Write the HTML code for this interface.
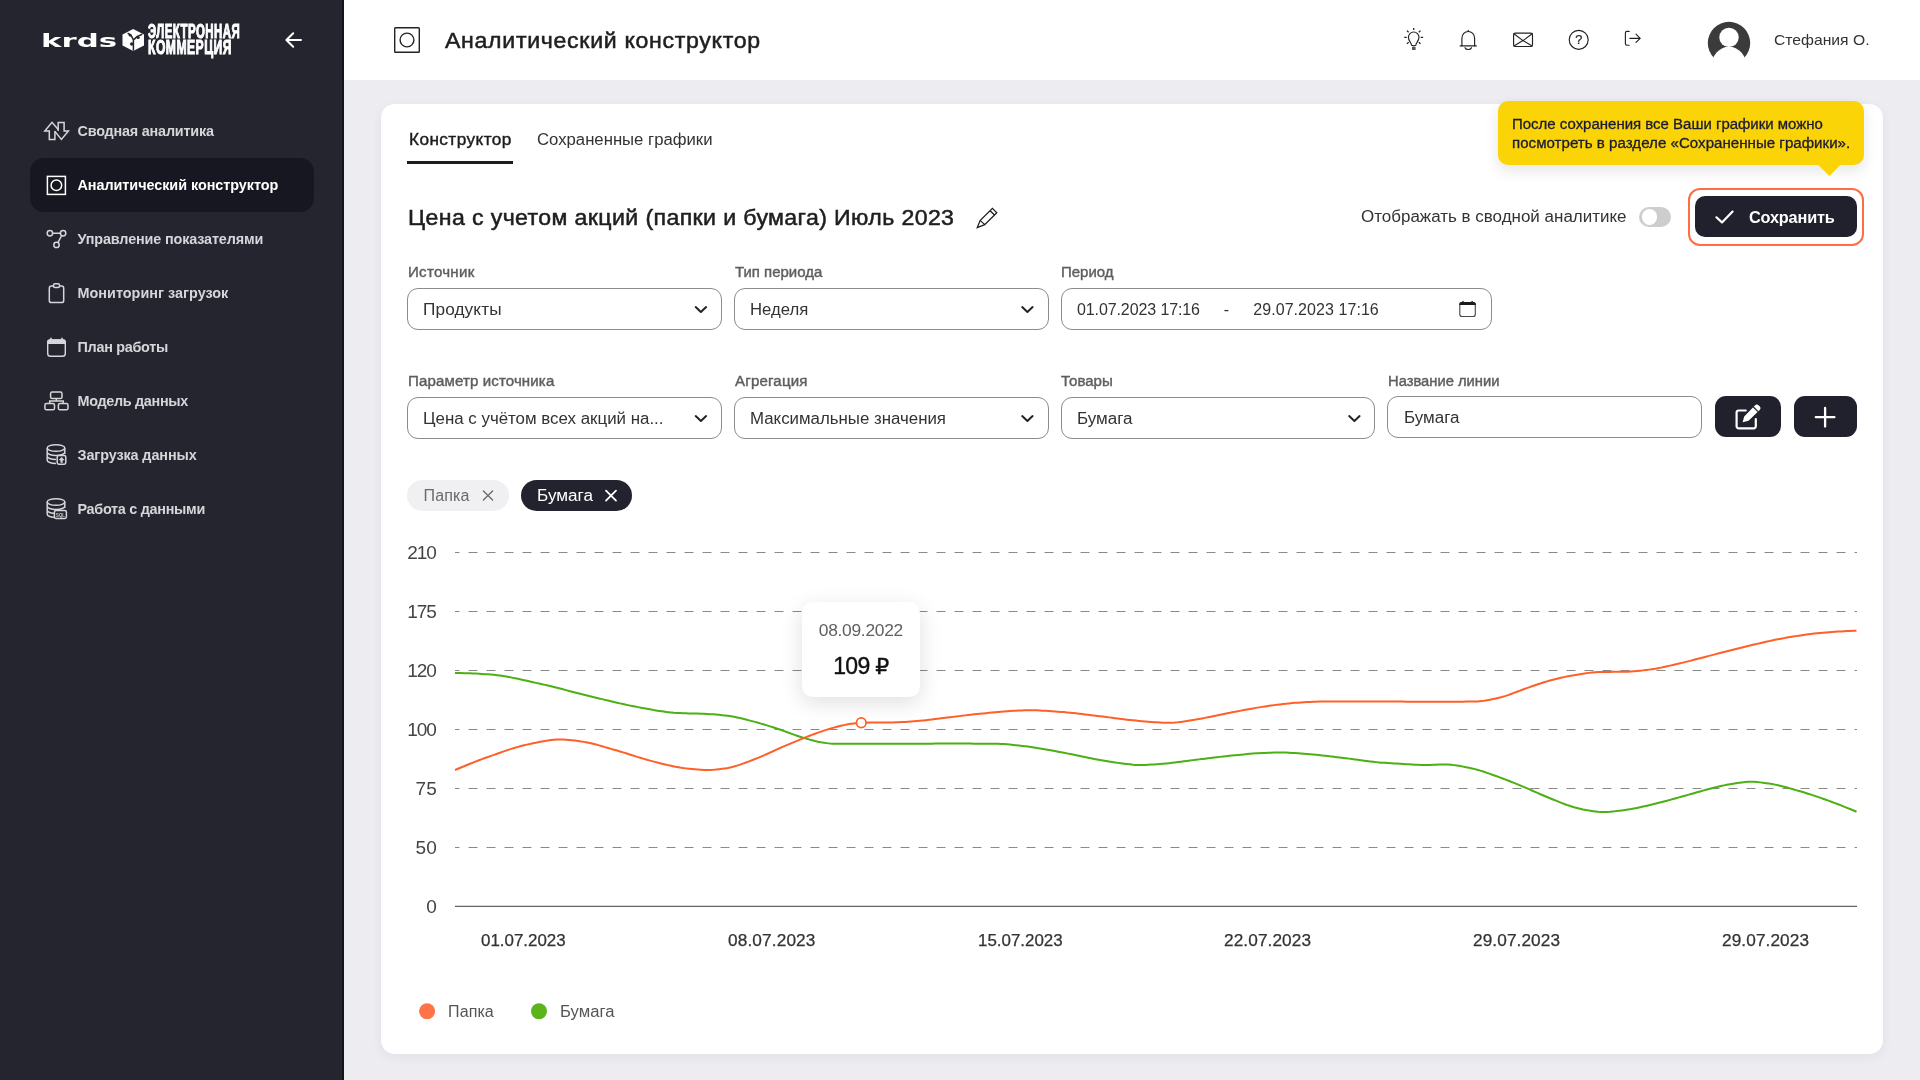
<!DOCTYPE html>
<html lang="ru">
<head>
<meta charset="utf-8">
<title>Аналитический конструктор</title>
<style>
html,body{margin:0;padding:0}
body{width:1920px;height:1080px;position:relative;overflow:hidden;background:#edecf1;font-family:"Liberation Sans",sans-serif;}
.t{position:absolute;white-space:nowrap;line-height:1;}
.a{position:absolute;box-sizing:border-box}
.sel{position:absolute;box-sizing:border-box;border:1px solid #8c8c8c;border-radius:11px;background:#fff;height:42px}
.btn{position:absolute;background:#20212c;border-radius:11px}
svg{position:absolute;left:0;top:0;overflow:visible}
svg text{font-family:"Liberation Sans",sans-serif}
</style>
</head>
<body>
<!-- sidebar -->
<div class="a" style="left:0;top:0;width:344px;height:1080px;background:#24252f"></div>
<div class="a" style="left:341.8px;top:0;width:2.2px;height:1080px;background:#14141f"></div>
<div class="a" style="left:30px;top:158px;width:284px;height:54px;border-radius:14px;background:#171721"></div>
<!-- header -->
<div class="a" style="left:344px;top:0;width:1576px;height:80px;background:#fff"></div>
<!-- card -->
<div class="a" style="left:381px;top:104px;width:1502px;height:949.6px;border-radius:14px;background:#fff;box-shadow:0 3px 12px rgba(40,40,70,.055)"></div>
<!-- tab underline -->
<div class="a" style="left:407px;top:161px;width:106px;height:3px;background:#1c1c1c"></div>
<!-- toggle -->
<div class="a" style="left:1639.1px;top:206.6px;width:31.7px;height:20.6px;border-radius:10.3px;background:#cdcdcd"></div>
<div class="a" style="left:1641.8px;top:209.4px;width:15.2px;height:15.2px;border-radius:7.6px;background:#fff"></div>
<!-- save -->
<div class="a" style="left:1687.9px;top:187.8px;width:176.1px;height:57.8px;border-radius:12px;border:2px solid #ff6d45"></div>
<div class="btn" style="left:1695px;top:196px;width:162px;height:41.4px;border-radius:10px"></div>
<!-- selects -->
<div class="sel" style="left:407px;top:288px;width:315px"></div>
<div class="sel" style="left:734px;top:288px;width:314.5px"></div>
<div class="sel" style="left:1060.5px;top:288px;width:431px"></div>
<div class="sel" style="left:407px;top:397px;width:315px"></div>
<div class="sel" style="left:734px;top:397px;width:314.5px"></div>
<div class="sel" style="left:1060.5px;top:397px;width:314.5px"></div>
<div class="sel" style="left:1387px;top:396px;width:315px"></div>
<div class="btn" style="left:1714.9px;top:396.2px;width:65.7px;height:41.3px"></div>
<div class="btn" style="left:1794px;top:396.2px;width:62.5px;height:41.3px"></div>
<!-- chips -->
<div class="a" style="left:407px;top:480px;width:102px;height:31px;border-radius:15.5px;background:#f0f0f3"></div>
<div class="a" style="left:521.2px;top:480px;width:110.6px;height:31px;border-radius:15.5px;background:#22232e"></div>
<svg width="1920" height="1080" viewBox="0 0 1920 1080">
<line x1="455" y1="552.5" x2="1857" y2="552.5" stroke="#8a8a8a" stroke-width="1.1" stroke-dasharray="9 9" stroke-dashoffset="4.5"/>
<line x1="455" y1="611.5" x2="1857" y2="611.5" stroke="#8a8a8a" stroke-width="1.1" stroke-dasharray="9 9" stroke-dashoffset="4.5"/>
<line x1="455" y1="670.5" x2="1857" y2="670.5" stroke="#8a8a8a" stroke-width="1.1" stroke-dasharray="9 9" stroke-dashoffset="4.5"/>
<line x1="455" y1="729.5" x2="1857" y2="729.5" stroke="#8a8a8a" stroke-width="1.1" stroke-dasharray="9 9" stroke-dashoffset="4.5"/>
<line x1="455" y1="788.5" x2="1857" y2="788.5" stroke="#8a8a8a" stroke-width="1.1" stroke-dasharray="9 9" stroke-dashoffset="4.5"/>
<line x1="455" y1="847.5" x2="1857" y2="847.5" stroke="#8a8a8a" stroke-width="1.1" stroke-dasharray="9 9" stroke-dashoffset="4.5"/>
<line x1="455" y1="906.4" x2="1857" y2="906.4" stroke="#666" stroke-width="1.2"/>
<path d="M455.0,673.00L458.0,673.02L461.0,673.07L464.0,673.13L467.0,673.23L470.0,673.34L473.0,673.47L476.0,673.62L479.0,673.78L482.0,673.96L485.0,674.15L488.0,674.36L491.0,674.58L494.0,674.85L497.0,675.18L500.0,675.57L503.0,676.02L506.0,676.51L509.0,677.05L512.0,677.62L515.0,678.22L518.0,678.85L521.0,679.50L524.0,680.16L527.0,680.84L530.0,681.52L533.0,682.20L536.0,682.87L539.0,683.53L542.0,684.19L545.0,684.87L548.0,685.57L551.0,686.30L554.0,687.04L557.0,687.80L560.0,688.57L563.0,689.34L566.0,690.13L569.0,690.91L572.0,691.70L575.0,692.48L578.0,693.26L581.0,694.03L584.0,694.78L587.0,695.53L590.0,696.25L593.0,696.97L596.0,697.69L599.0,698.42L602.0,699.14L605.0,699.87L608.0,700.59L611.0,701.30L614.0,702.01L617.0,702.71L620.0,703.39L623.0,704.06L626.0,704.72L629.0,705.36L632.0,705.97L635.0,706.57L638.0,707.14L641.0,707.68L644.0,708.23L647.0,708.78L650.0,709.33L653.0,709.87L656.0,710.39L659.0,710.89L662.0,711.36L665.0,711.79L668.0,712.17L671.0,712.50L674.0,712.77L677.0,712.97L680.0,713.11L683.0,713.22L686.0,713.31L689.0,713.38L692.0,713.45L695.0,713.52L698.0,713.59L701.0,713.69L704.0,713.82L707.0,713.96L710.0,714.14L713.0,714.34L716.0,714.58L719.0,714.84L722.0,715.13L725.0,715.46L728.0,715.81L731.0,716.25L734.0,716.79L737.0,717.40L740.0,718.08L743.0,718.81L746.0,719.57L749.0,720.35L752.0,721.12L755.0,721.90L758.0,722.73L761.0,723.59L764.0,724.48L767.0,725.40L770.0,726.34L773.0,727.29L776.0,728.26L779.0,729.25L782.0,730.29L785.0,731.37L788.0,732.48L791.0,733.59L794.0,734.68L797.0,735.74L800.0,736.73L803.0,737.65L806.0,738.54L809.0,739.41L812.0,740.25L815.0,741.02L818.0,741.71L821.0,742.27L824.0,742.71L827.0,743.12L830.0,743.46L833.0,743.69L836.0,743.76L839.0,743.78L842.0,743.81L845.0,743.82L848.0,743.84L851.0,743.85L854.0,743.86L857.0,743.86L860.0,743.87L863.0,743.87L866.0,743.86L869.0,743.86L872.0,743.86L875.0,743.85L878.0,743.84L881.0,743.83L884.0,743.82L887.0,743.81L890.0,743.79L893.0,743.78L896.0,743.77L899.0,743.75L902.0,743.74L905.0,743.73L908.0,743.72L911.0,743.70L914.0,743.69L917.0,743.68L920.0,743.67L923.0,743.66L926.0,743.65L929.0,743.64L932.0,743.63L935.0,743.62L938.0,743.62L941.0,743.61L944.0,743.61L947.0,743.60L950.0,743.60L953.0,743.60L956.0,743.60L959.0,743.60L962.0,743.61L965.0,743.61L968.0,743.62L971.0,743.62L974.0,743.63L977.0,743.64L980.0,743.66L983.0,743.67L986.0,743.69L989.0,743.71L992.0,743.73L995.0,743.75L998.0,743.81L1001.0,743.93L1004.0,744.11L1007.0,744.34L1010.0,744.61L1013.0,744.91L1016.0,745.23L1019.0,745.57L1022.0,745.91L1025.0,746.25L1028.0,746.61L1031.0,747.00L1034.0,747.43L1037.0,747.90L1040.0,748.39L1043.0,748.90L1046.0,749.43L1049.0,749.98L1052.0,750.54L1055.0,751.10L1058.0,751.66L1061.0,752.22L1064.0,752.78L1067.0,753.36L1070.0,753.96L1073.0,754.58L1076.0,755.20L1079.0,755.84L1082.0,756.47L1085.0,757.10L1088.0,757.72L1091.0,758.33L1094.0,758.91L1097.0,759.47L1100.0,760.00L1103.0,760.51L1106.0,761.01L1109.0,761.50L1112.0,761.98L1115.0,762.43L1118.0,762.87L1121.0,763.27L1124.0,763.64L1127.0,763.98L1130.0,764.35L1133.0,764.67L1136.0,764.91L1139.0,765.00L1142.0,764.98L1145.0,764.90L1148.0,764.77L1151.0,764.59L1154.0,764.39L1157.0,764.17L1160.0,763.94L1163.0,763.71L1166.0,763.46L1169.0,763.16L1172.0,762.84L1175.0,762.49L1178.0,762.11L1181.0,761.73L1184.0,761.33L1187.0,760.93L1190.0,760.52L1193.0,760.13L1196.0,759.74L1199.0,759.37L1202.0,759.01L1205.0,758.66L1208.0,758.30L1211.0,757.93L1214.0,757.57L1217.0,757.22L1220.0,756.87L1223.0,756.52L1226.0,756.18L1229.0,755.86L1232.0,755.54L1235.0,755.24L1238.0,754.95L1241.0,754.67L1244.0,754.39L1247.0,754.11L1250.0,753.84L1253.0,753.60L1256.0,753.37L1259.0,753.18L1262.0,753.02L1265.0,752.89L1268.0,752.77L1271.0,752.66L1274.0,752.58L1277.0,752.52L1280.0,752.50L1283.0,752.53L1286.0,752.61L1289.0,752.73L1292.0,752.89L1295.0,753.08L1298.0,753.30L1301.0,753.54L1304.0,753.78L1307.0,754.04L1310.0,754.29L1313.0,754.54L1316.0,754.80L1319.0,755.09L1322.0,755.39L1325.0,755.72L1328.0,756.06L1331.0,756.41L1334.0,756.77L1337.0,757.14L1340.0,757.51L1343.0,757.89L1346.0,758.26L1349.0,758.63L1352.0,759.00L1355.0,759.39L1358.0,759.80L1361.0,760.22L1364.0,760.64L1367.0,761.04L1370.0,761.43L1373.0,761.80L1376.0,762.13L1379.0,762.41L1382.0,762.66L1385.0,762.87L1388.0,763.07L1391.0,763.25L1394.0,763.42L1397.0,763.58L1400.0,763.75L1403.0,763.93L1406.0,764.13L1409.0,764.33L1412.0,764.53L1415.0,764.70L1418.0,764.85L1421.0,764.95L1424.0,765.00L1427.0,764.98L1430.0,764.92L1433.0,764.81L1436.0,764.70L1439.0,764.60L1442.0,764.52L1445.0,764.50L1448.0,764.58L1451.0,764.80L1454.0,765.13L1457.0,765.56L1460.0,766.06L1463.0,766.61L1466.0,767.20L1469.0,767.80L1472.0,768.42L1475.0,769.15L1478.0,769.96L1481.0,770.86L1484.0,771.82L1487.0,772.84L1490.0,773.89L1493.0,774.97L1496.0,776.06L1499.0,777.14L1502.0,778.23L1505.0,779.35L1508.0,780.52L1511.0,781.71L1514.0,782.93L1517.0,784.17L1520.0,785.42L1523.0,786.67L1526.0,787.92L1529.0,789.20L1532.0,790.50L1535.0,791.82L1538.0,793.14L1541.0,794.46L1544.0,795.75L1547.0,797.02L1550.0,798.25L1553.0,799.47L1556.0,800.69L1559.0,801.90L1562.0,803.09L1565.0,804.24L1568.0,805.32L1571.0,806.32L1574.0,807.22L1577.0,808.03L1580.0,808.79L1583.0,809.48L1586.0,810.09L1589.0,810.60L1592.0,811.03L1595.0,811.43L1598.0,811.77L1601.0,811.97L1604.0,811.99L1607.0,811.90L1610.0,811.71L1613.0,811.45L1616.0,811.13L1619.0,810.77L1622.0,810.39L1625.0,810.00L1628.0,809.57L1631.0,809.08L1634.0,808.52L1637.0,807.91L1640.0,807.27L1643.0,806.60L1646.0,805.92L1649.0,805.23L1652.0,804.54L1655.0,803.82L1658.0,803.07L1661.0,802.29L1664.0,801.50L1667.0,800.68L1670.0,799.86L1673.0,799.03L1676.0,798.19L1679.0,797.35L1682.0,796.51L1685.0,795.68L1688.0,794.86L1691.0,794.04L1694.0,793.19L1697.0,792.33L1700.0,791.47L1703.0,790.62L1706.0,789.78L1709.0,788.96L1712.0,788.16L1715.0,787.41L1718.0,786.70L1721.0,786.03L1724.0,785.39L1727.0,784.78L1730.0,784.20L1733.0,783.67L1736.0,783.21L1739.0,782.80L1742.0,782.39L1745.0,782.04L1748.0,781.81L1751.0,781.75L1754.0,781.85L1757.0,782.07L1760.0,782.38L1763.0,782.75L1766.0,783.17L1769.0,783.60L1772.0,784.06L1775.0,784.61L1778.0,785.24L1781.0,785.95L1784.0,786.71L1787.0,787.51L1790.0,788.35L1793.0,789.22L1796.0,790.09L1799.0,790.96L1802.0,791.83L1805.0,792.74L1808.0,793.67L1811.0,794.64L1814.0,795.63L1817.0,796.64L1820.0,797.68L1823.0,798.73L1826.0,799.80L1829.0,800.89L1832.0,801.98L1835.0,803.10L1838.0,804.25L1841.0,805.42L1844.0,806.60L1847.0,807.81L1850.0,809.04L1853.0,810.28L1856.0,811.54L1856.5,811.75" fill="none" stroke="#4caf14" stroke-width="2" stroke-linejoin="round"/>
<path d="M455.0,770.00L458.0,768.72L461.0,767.46L464.0,766.22L467.0,764.99L470.0,763.79L473.0,762.60L476.0,761.42L479.0,760.28L482.0,759.15L485.0,758.04L488.0,756.96L491.0,755.90L494.0,754.84L497.0,753.77L500.0,752.71L503.0,751.67L506.0,750.64L509.0,749.64L512.0,748.67L515.0,747.75L518.0,746.87L521.0,746.05L524.0,745.29L527.0,744.61L530.0,743.96L533.0,743.31L536.0,742.67L539.0,742.05L542.0,741.46L545.0,740.93L548.0,740.46L551.0,740.06L554.0,739.76L557.0,739.57L560.0,739.50L563.0,739.55L566.0,739.71L569.0,739.95L572.0,740.25L575.0,740.61L578.0,740.99L581.0,741.39L584.0,741.87L587.0,742.44L590.0,743.09L593.0,743.81L596.0,744.58L599.0,745.40L602.0,746.25L605.0,747.12L608.0,748.00L611.0,748.87L614.0,749.72L617.0,750.56L620.0,751.44L623.0,752.35L626.0,753.28L629.0,754.23L632.0,755.18L635.0,756.13L638.0,757.08L641.0,758.00L644.0,758.90L647.0,759.77L650.0,760.60L653.0,761.38L656.0,762.14L659.0,762.91L662.0,763.67L665.0,764.41L668.0,765.13L671.0,765.81L674.0,766.45L677.0,767.03L680.0,767.55L683.0,768.00L686.0,768.37L689.0,768.71L692.0,769.04L695.0,769.34L698.0,769.60L701.0,769.80L704.0,769.94L707.0,770.00L710.0,769.96L713.0,769.80L716.0,769.55L719.0,769.22L722.0,768.83L725.0,768.39L728.0,767.92L731.0,767.32L734.0,766.56L737.0,765.66L740.0,764.66L743.0,763.58L746.0,762.46L749.0,761.32L752.0,760.19L755.0,759.05L758.0,757.85L761.0,756.60L764.0,755.31L767.0,753.98L770.0,752.63L773.0,751.26L776.0,749.89L779.0,748.53L782.0,747.18L785.0,745.86L788.0,744.58L791.0,743.34L794.0,742.11L797.0,740.87L800.0,739.63L803.0,738.40L806.0,737.19L809.0,735.99L812.0,734.83L815.0,733.70L818.0,732.61L821.0,731.57L824.0,730.58L827.0,729.65L830.0,728.76L833.0,727.90L836.0,727.06L839.0,726.27L842.0,725.54L845.0,724.89L848.0,724.32L851.0,723.85L854.0,723.41L857.0,723.04L860.0,722.80L863.0,722.71L866.0,722.66L869.0,722.62L872.0,722.60L875.0,722.59L878.0,722.58L881.0,722.57L884.0,722.56L887.0,722.53L890.0,722.50L893.0,722.44L896.0,722.34L899.0,722.22L902.0,722.06L905.0,721.88L908.0,721.68L911.0,721.47L914.0,721.24L917.0,721.00L920.0,720.75L923.0,720.47L926.0,720.15L929.0,719.79L932.0,719.42L935.0,719.05L938.0,718.69L941.0,718.34L944.0,717.98L947.0,717.61L950.0,717.24L953.0,716.87L956.0,716.49L959.0,716.12L962.0,715.75L965.0,715.38L968.0,715.03L971.0,714.68L974.0,714.34L977.0,714.01L980.0,713.70L983.0,713.41L986.0,713.13L989.0,712.87L992.0,712.61L995.0,712.34L998.0,712.07L1001.0,711.81L1004.0,711.55L1007.0,711.31L1010.0,711.08L1013.0,710.87L1016.0,710.68L1019.0,710.53L1022.0,710.40L1025.0,710.31L1028.0,710.26L1031.0,710.25L1034.0,710.29L1037.0,710.37L1040.0,710.48L1043.0,710.63L1046.0,710.80L1049.0,711.00L1052.0,711.21L1055.0,711.43L1058.0,711.66L1061.0,711.89L1064.0,712.12L1067.0,712.38L1070.0,712.66L1073.0,712.98L1076.0,713.31L1079.0,713.66L1082.0,714.02L1085.0,714.39L1088.0,714.77L1091.0,715.15L1094.0,715.52L1097.0,715.89L1100.0,716.25L1103.0,716.61L1106.0,716.99L1109.0,717.37L1112.0,717.77L1115.0,718.16L1118.0,718.55L1121.0,718.94L1124.0,719.31L1127.0,719.67L1130.0,720.01L1133.0,720.33L1136.0,720.62L1139.0,720.88L1142.0,721.14L1145.0,721.41L1148.0,721.67L1151.0,721.91L1154.0,722.14L1157.0,722.34L1160.0,722.51L1163.0,722.64L1166.0,722.72L1169.0,722.75L1172.0,722.71L1175.0,722.55L1178.0,722.28L1181.0,721.92L1184.0,721.50L1187.0,721.02L1190.0,720.50L1193.0,719.97L1196.0,719.43L1199.0,718.92L1202.0,718.41L1205.0,717.88L1208.0,717.31L1211.0,716.71L1214.0,716.10L1217.0,715.47L1220.0,714.83L1223.0,714.19L1226.0,713.55L1229.0,712.92L1232.0,712.31L1235.0,711.72L1238.0,711.16L1241.0,710.61L1244.0,710.05L1247.0,709.50L1250.0,708.95L1253.0,708.42L1256.0,707.89L1259.0,707.38L1262.0,706.88L1265.0,706.40L1268.0,705.95L1271.0,705.52L1274.0,705.13L1277.0,704.75L1280.0,704.39L1283.0,704.04L1286.0,703.70L1289.0,703.39L1292.0,703.10L1295.0,702.85L1298.0,702.63L1301.0,702.44L1304.0,702.27L1307.0,702.10L1310.0,701.95L1313.0,701.81L1316.0,701.69L1319.0,701.59L1322.0,701.53L1325.0,701.50L1328.0,701.49L1331.0,701.48L1334.0,701.48L1337.0,701.47L1340.0,701.47L1343.0,701.47L1346.0,701.46L1349.0,701.47L1352.0,701.47L1355.0,701.47L1358.0,701.47L1361.0,701.48L1364.0,701.48L1367.0,701.49L1370.0,701.50L1373.0,701.51L1376.0,701.51L1379.0,701.52L1382.0,701.53L1385.0,701.54L1388.0,701.55L1391.0,701.57L1394.0,701.58L1397.0,701.59L1400.0,701.60L1403.0,701.61L1406.0,701.63L1409.0,701.64L1412.0,701.65L1415.0,701.66L1418.0,701.68L1421.0,701.69L1424.0,701.70L1427.0,701.71L1430.0,701.72L1433.0,701.72L1436.0,701.73L1439.0,701.73L1442.0,701.73L1445.0,701.73L1448.0,701.72L1451.0,701.71L1454.0,701.70L1457.0,701.69L1460.0,701.67L1463.0,701.64L1466.0,701.61L1469.0,701.58L1472.0,701.54L1475.0,701.50L1478.0,701.38L1481.0,701.12L1484.0,700.73L1487.0,700.25L1490.0,699.69L1493.0,699.07L1496.0,698.41L1499.0,697.73L1502.0,697.01L1505.0,696.14L1508.0,695.15L1511.0,694.06L1514.0,692.92L1517.0,691.75L1520.0,690.58L1523.0,689.46L1526.0,688.40L1529.0,687.35L1532.0,686.30L1535.0,685.24L1538.0,684.21L1541.0,683.20L1544.0,682.24L1547.0,681.34L1550.0,680.50L1553.0,679.71L1556.0,678.95L1559.0,678.22L1562.0,677.53L1565.0,676.87L1568.0,676.25L1571.0,675.68L1574.0,675.16L1577.0,674.68L1580.0,674.20L1583.0,673.73L1586.0,673.29L1589.0,672.88L1592.0,672.53L1595.0,672.26L1598.0,672.07L1601.0,671.98L1604.0,671.93L1607.0,671.90L1610.0,671.88L1613.0,671.86L1616.0,671.85L1619.0,671.83L1622.0,671.80L1625.0,671.75L1628.0,671.66L1631.0,671.50L1634.0,671.28L1637.0,671.02L1640.0,670.71L1643.0,670.37L1646.0,670.01L1649.0,669.63L1652.0,669.22L1655.0,668.75L1658.0,668.21L1661.0,667.61L1664.0,666.98L1667.0,666.31L1670.0,665.63L1673.0,664.95L1676.0,664.27L1679.0,663.58L1682.0,662.87L1685.0,662.13L1688.0,661.38L1691.0,660.61L1694.0,659.83L1697.0,659.05L1700.0,658.26L1703.0,657.47L1706.0,656.68L1709.0,655.90L1712.0,655.13L1715.0,654.36L1718.0,653.59L1721.0,652.81L1724.0,652.03L1727.0,651.25L1730.0,650.47L1733.0,649.70L1736.0,648.93L1739.0,648.17L1742.0,647.42L1745.0,646.69L1748.0,645.97L1751.0,645.27L1754.0,644.57L1757.0,643.87L1760.0,643.17L1763.0,642.48L1766.0,641.80L1769.0,641.13L1772.0,640.48L1775.0,639.85L1778.0,639.24L1781.0,638.66L1784.0,638.11L1787.0,637.58L1790.0,637.09L1793.0,636.60L1796.0,636.12L1799.0,635.65L1802.0,635.20L1805.0,634.76L1808.0,634.35L1811.0,633.96L1814.0,633.59L1817.0,633.25L1820.0,632.94L1823.0,632.67L1826.0,632.42L1829.0,632.19L1832.0,631.97L1835.0,631.77L1838.0,631.57L1841.0,631.39L1844.0,631.23L1847.0,631.08L1850.0,630.95L1853.0,630.85L1856.0,630.76L1856.5,630.75" fill="none" stroke="#ff6028" stroke-width="2" stroke-linejoin="round"/>
<circle cx="861.25" cy="722.75" r="4.8" fill="#fff" stroke="#ff6028" stroke-width="1.7"/>
<circle cx="427.1" cy="1011.25" r="8" fill="#ff7446"/>
<circle cx="539" cy="1011.25" r="8" fill="#5bb41c"/>
</svg>
<!-- chart tooltip -->
<div class="a" style="left:802px;top:602.4px;width:118px;height:94.2px;border-radius:10.5px;background:#fff;box-shadow:0 6px 22px rgba(0,0,0,.13)"></div>
<!-- yellow hint -->
<div class="a" style="left:1498px;top:101px;width:366px;height:64px;border-radius:10px;background:#fbd408;box-shadow:0 6px 14px rgba(30,30,50,.11)"></div>
<svg width="1920" height="1080" viewBox="0 0 1920 1080" fill="none" style="will-change:transform">
<!-- yellow hint arrow -->
<path d="M1817.8,164.5H1840.8L1829.9,175.6Q1829.4,176.1 1828.9,175.6Z" fill="#fbd408"/>
<!-- back arrow -->
<path d="M301,40H286.6M293.2,33.2L286.4,40L293.2,46.8" stroke="#fff" stroke-width="2" stroke-linecap="round" stroke-linejoin="round"/>
<!-- nav icons -->
<g stroke="#d6d6da" stroke-width="1.5" stroke-linejoin="miter">
 <!-- 1 arrows -->
 <path d="M58.2,129.6L52,122.3L44.8,131H49.3V139.4H54.9V131"/>
 <path d="M54.9,131.4L61.4,139.4L68.4,131H64.1V122.5H58.2V131"/>
 <!-- 3 nodes -->
 <circle cx="49.9" cy="233.2" r="2.7"/><circle cx="63.1" cy="233.2" r="2.7"/><circle cx="56.5" cy="244.9" r="2.7"/>
 <path d="M52.6,233.2H60.4M61.7,235.5L57.9,242.6"/>
 <!-- 4 clipboard -->
 <rect x="49.3" y="286" width="14.4" height="16.6" rx="2.2"/>
 <rect x="53.5" y="283.8" width="6" height="3.6" rx="1.5" fill="#24252f"/>
 <!-- 5 calendar -->
 <rect x="47.7" y="339.9" width="17.6" height="16.4" rx="2.8" stroke-width="1.4"/>
 <path d="M47,344.1V342.2A3,3 0 0 1 50,339.2H63A3,3 0 0 1 66,342.2V344.1Z" fill="#d6d6da" stroke="none"/>
 <path d="M51,338.4V340M62,338.4V340" stroke-width="1.6" stroke-linecap="round"/>
 <!-- 6 model -->
 <rect x="50.6" y="392.1" width="11.4" height="6.4" rx="1.6"/>
 <rect x="44.9" y="403.6" width="9.6" height="6.2" rx="1.6"/>
 <rect x="58.4" y="403.6" width="9.6" height="6.2" rx="1.6"/>
 <path d="M56.3,398.5V401M49.7,403.6V401H63.2V403.6"/>
 <!-- 7 db upload -->
 <ellipse cx="56" cy="448" rx="8.8" ry="3.3"/>
 <path d="M47.2,448V460.2C47.2,462 51,463.5 56,463.5M64.8,448V454M47.2,452.2C47.2,454 51,455.5 56,455.5 61,455.5 64.8,454 64.8,452.2M47.2,456.2C47.2,458 51,459.5 56,459.5"/>
 <rect x="57.2" y="455.6" width="8.6" height="8.6" rx="1.6" fill="#24252f"/>
 <path d="M61.6,457L64.6,460.3H62.7V462.8H60.5V460.3H58.6Z" fill="#d6d6da" stroke="none"/>
 <!-- 8 db sql -->
 <ellipse cx="56" cy="502" rx="8.8" ry="3.3"/>
 <path d="M47.2,502V514.2C47.2,516 51,517.5 56,517.5M64.8,502V508M47.2,506.2C47.2,508 51,509.5 56,509.5 61,509.5 64.8,508 64.8,506.2M47.2,510.2C47.2,512 51,513.5 56,513.5"/>
 <rect x="54.4" y="510.6" width="12" height="7.8" rx="1.6" fill="#24252f"/>
</g>
<text x="60.4" y="516.6" font-size="5.4" font-weight="700" fill="#d6d6da" text-anchor="middle" textLength="8.6" lengthAdjust="spacingAndGlyphs">SQL</text>
<!-- 2 active -->
<rect x="47.4" y="176.4" width="18" height="18" stroke="#fff" stroke-width="1.5"/>
<circle cx="56.4" cy="185.3" r="5.3" stroke="#fff" stroke-width="1.5"/>
<!-- header page icon -->
<rect x="394.7" y="27.7" width="24.6" height="24.6" rx="0.8" stroke="#222" stroke-width="1.4"/>
<circle cx="407" cy="40" r="6.9" stroke="#222" stroke-width="1.4"/>
<!-- header icons -->
<g stroke="#222" stroke-width="1.15" stroke-linecap="round" stroke-linejoin="round">
 <!-- bulb -->
 <path d="M1411.6,45.3C1411.4,42.6 1408.4,41.2 1408.4,37.3A5.3,5.3 0 0 1 1419,37.3C1419,41.2 1416,42.6 1415.8,45.3Q1413.7,46.3 1411.6,45.3Z"/>
 <path d="M1412,47.7H1415.6M1412,49.1H1415.6" stroke-width="1.1" stroke-linecap="butt"/>
 <path d="M1413.7,28.1V30.1M1406.9,30.6L1408.6,32.2M1420.5,30.6L1418.8,32.2M1404.3,37.4H1406.7M1420.7,37.4H1423.1M1406.9,43.9L1408.6,42.3M1420.5,43.9L1418.8,42.3" stroke-width="1.3" stroke-linecap="butt"/>
 <!-- bell -->
 <path d="M1461.9,45.8V38.2A6.35,6.7 0 0 1 1474.6,38.2V45.8"/>
 <path d="M1460.2,45.9H1476.3" stroke-width="1.25"/>
 <path d="M1465,47.7A3.4,2.6 0 0 0 1471.5,47.7M1468.25,30.3V31.4"/>
 <!-- mail -->
 <rect x="1513.6" y="33.1" width="18.9" height="13.4" rx="1.8"/>
 <path d="M1513.9,33.7L1523,40.6L1532.2,33.7M1513.9,46L1523,40.6L1532.2,46"/>
 <!-- help -->
 <circle cx="1578.7" cy="39.8" r="9.5"/>
 <!-- logout -->
 <path d="M1629.2,31.4H1627A1.6,1.6 0 0 0 1625.4,33V43.6A1.6,1.6 0 0 0 1627,45.2H1629.2"/>
 <path d="M1629.8,38.3H1640M1636,34.2L1640.2,38.3L1636,42.4"/>
</g>
<text x="1578.7" y="44.3" font-size="12.8" font-weight="400" fill="#222" stroke="#222" stroke-width=".2" text-anchor="middle">?</text>
<!-- avatar -->
<clipPath id="av"><circle cx="1729" cy="43" r="22"/></clipPath>
<circle cx="1729" cy="43" r="21.2" fill="#3b3b3b"/>
<circle cx="1729" cy="37.4" r="9.7" fill="#fff"/>
<ellipse cx="1729" cy="67" rx="17.6" ry="20.4" fill="#fff" clip-path="url(#av)"/>
<!-- pencil near title -->
<g stroke="#1c1c1c" stroke-width="1.25" stroke-linejoin="miter">
 <path d="M977.3,227.6L980.1,220.5L992.4,208.3L996.8,212.7L984.7,224.6Z"/>
 <path d="M990.1,210.7L994.5,215M980.3,220.6L984.6,224.4"/>
</g>
<!-- chevrons -->
<g stroke="#222" stroke-width="2" stroke-linecap="round" stroke-linejoin="round">
 <path d="M695.7,307.1L700.9,311.9L706.1,307.1"/>
 <path d="M1022.2,307.1L1027.4,311.9L1032.6,307.1"/>
 <path d="M695.7,416.1L700.9,420.9L706.1,416.1"/>
 <path d="M1022.2,416.1L1027.4,420.9L1032.6,416.1"/>
 <path d="M1349.2,416.1L1354.4,420.9L1359.6,416.1"/>
</g>
<!-- calendar in period -->
<rect x="1459.8" y="302.7" width="15.5" height="13.8" rx="2.3" stroke="#4a4a4a" stroke-width="1.15"/>
<path d="M1459.2,305V304.3A2.4,2.4 0 0 1 1461.6,301.9H1473.5A2.4,2.4 0 0 1 1475.9,304.3V305Z" fill="#1c1c1c"/>
<path d="M1463,301.4V302.4M1472.1,301.4V302.4" stroke="#1c1c1c" stroke-width="1.4" stroke-linecap="round"/>
<!-- check -->
<path d="M1716.4,217.3L1722,222.4L1732.6,211.6" stroke="#fff" stroke-width="2.2" stroke-linecap="round" stroke-linejoin="round"/>
<!-- edit icon -->
<path d="M1745.8,410.5H1738.7A2.1,2.1 0 0 0 1736.6,412.6V426.2A2.1,2.1 0 0 0 1738.7,428.3H1753.7A2.1,2.1 0 0 0 1755.8,426.2V419.2" stroke="#fff" stroke-width="2.2" stroke-linecap="round"/>
<path d="M1742.6,422.2L1744.2,416.6L1754.9,405.4A2.7,2.7 0 0 1 1758.8,405.4L1759.6,406.2A2.7,2.7 0 0 1 1759.6,410L1748.6,420.8Z" fill="#fff" stroke="#20212c" stroke-width="1.5" paint-order="stroke"/>
<path d="M1753.4,407L1758,411.6" stroke="#20212c" stroke-width="1.3"/>
<!-- plus -->
<path d="M1815.8,417.2H1834.4M1825.1,407.9V426.5" stroke="#fff" stroke-width="2.3" stroke-linecap="round"/>
<!-- chip x -->
<path d="M483.4,490.9L492.6,500M492.6,490.9L483.4,500" stroke="#6a6a6a" stroke-width="1.35" stroke-linecap="round"/>
<path d="M606,490.6L616,500.6M616,490.6L606,500.6" stroke="#fff" stroke-width="1.8" stroke-linecap="round"/>
</svg>

<div class="a" style="left:0;top:0;width:1920px;height:1080px;will-change:transform">
<svg width="344" height="80" viewBox="0 0 344 80">
<text x="41" y="47" font-size="17.8" font-weight="700" fill="#fff" textLength="76" lengthAdjust="spacingAndGlyphs" style="font-family:'DejaVu Sans',sans-serif">krds</text>
<path d="M133.2,29L144,34.5V45.5L133.2,51L122.5,45.5V34.5Z" fill="#fff"/>
<path d="M127.6,33.2Q131.5,34.6 133.4,40M142.3,34.3Q137.4,35.6 133.4,40V50.8" stroke="#24252f" stroke-width="1.5" fill="none"/>
<circle cx="130.2" cy="35.2" r="1.4" fill="#24252f"/><circle cx="138.2" cy="37.6" r="1.5" fill="#24252f"/><circle cx="131.7" cy="44" r="1.7" fill="#24252f"/>
</svg>
<span class="t" style="left:147.5px;top:21.6px;font-size:19.6px;font-weight:700;color:#fff;transform-origin:0 0;transform:scaleX(.585);-webkit-text-stroke:1.1px #fff;letter-spacing:.8px">ЭЛЕКТРОННАЯ</span>
<span class="t" style="left:147.5px;top:38.2px;font-size:19.4px;font-weight:700;color:#fff;transform-origin:0 0;transform:scaleX(.625);-webkit-text-stroke:1.1px #fff;letter-spacing:.8px">КОММЕРЦИЯ</span>

<span class="t" style="font-size:14.4px;font-weight:700;color:#d6d6da;top:124.00px;left:77.50px;letter-spacing:-0.198px;">Сводная аналитика</span>
<span class="t" style="font-size:14.4px;font-weight:700;color:#fff;top:178.00px;left:77.50px;letter-spacing:-0.043px;">Аналитический конструктор</span>
<span class="t" style="font-size:14.4px;font-weight:700;color:#d6d6da;top:232.00px;left:77.50px;letter-spacing:-0.144px;">Управление показателями</span>
<span class="t" style="font-size:14.4px;font-weight:700;color:#d6d6da;top:286.00px;left:77.50px;letter-spacing:0.019px;">Мониторинг загрузок</span>
<span class="t" style="font-size:14.4px;font-weight:700;color:#d6d6da;top:340.00px;left:77.50px;letter-spacing:-0.284px;">План работы</span>
<span class="t" style="font-size:14.4px;font-weight:700;color:#d6d6da;top:394.00px;left:77.50px;letter-spacing:-0.311px;">Модель данных</span>
<span class="t" style="font-size:14.4px;font-weight:700;color:#d6d6da;top:448.00px;left:77.50px;letter-spacing:-0.101px;">Загрузка данных</span>
<span class="t" style="font-size:14.4px;font-weight:700;color:#d6d6da;top:502.00px;left:77.50px;letter-spacing:-0.286px;">Работа с данными</span>
<span class="t" style="font-size:21.5px;font-weight:400;color:#1e1e1e;top:31.00px;left:444.90px;letter-spacing:0.646px;-webkit-text-stroke:0.5px #1e1e1e;transform-origin:0 0;transform:scaleX(1.0750);">Аналитический конструктор</span>
<span class="t" style="font-size:15px;font-weight:400;color:#333;top:32.00px;left:1773.50px;transform-origin:0 0;transform:scaleX(1.0453);">Стефания О.</span>
<span class="t" style="font-size:16px;font-weight:400;color:#1c1c1c;top:132.00px;left:409.20px;letter-spacing:0.393px;-webkit-text-stroke:0.4px #1c1c1c;transform-origin:0 0;transform:scaleX(1.0750);">Конструктор</span>
<span class="t" style="font-size:16px;font-weight:400;color:#333;top:132.00px;left:537.00px;transform-origin:0 0;transform:scaleX(1.0446);">Сохраненные графики</span>
<span class="t" style="font-size:21.5px;font-weight:400;color:#1e1e1e;top:208.00px;left:408.00px;letter-spacing:0.363px;-webkit-text-stroke:0.5px #1e1e1e;transform-origin:0 0;transform:scaleX(1.0750);">Цена с учетом акций (папки и бумага) Июль 2023</span>
<span class="t" style="font-size:16px;font-weight:400;color:#333;top:209.00px;left:1360.50px;transform-origin:0 0;transform:scaleX(1.0606);">Отображать в сводной аналитике</span>
<span class="t" style="font-size:16.3px;font-weight:700;color:#fff;top:209.00px;left:1749.00px;letter-spacing:-0.173px;">Сохранить</span>
<span class="t" style="font-size:14px;font-weight:400;color:#1b1b33;top:117.00px;left:1511.50px;-webkit-text-stroke:0.3px #1b1b33;transform-origin:0 0;transform:scaleX(1.0698);">После сохранения все Ваши графики можно</span>
<span class="t" style="font-size:14px;font-weight:400;color:#1b1b33;top:136.00px;left:1511.50px;letter-spacing:0.033px;-webkit-text-stroke:0.3px #1b1b33;transform-origin:0 0;transform:scaleX(1.0750);">посмотреть в разделе «Сохраненные графики».</span>
<span class="t" style="font-size:14px;font-weight:400;color:#5e5e5e;top:265.00px;left:407.50px;letter-spacing:0.264px;-webkit-text-stroke:0.4px #5e5e5e;transform-origin:0 0;transform:scaleX(1.0750);">Источник</span>
<span class="t" style="font-size:14px;font-weight:400;color:#5e5e5e;top:265.00px;left:734.50px;-webkit-text-stroke:0.4px #5e5e5e;transform-origin:0 0;transform:scaleX(1.0687);">Тип периода</span>
<span class="t" style="font-size:14px;font-weight:400;color:#5e5e5e;top:265.00px;left:1061.25px;-webkit-text-stroke:0.4px #5e5e5e;transform-origin:0 0;transform:scaleX(1.0690);">Период</span>
<span class="t" style="font-size:14px;font-weight:400;color:#5e5e5e;top:374.00px;left:407.50px;letter-spacing:0.116px;-webkit-text-stroke:0.4px #5e5e5e;transform-origin:0 0;transform:scaleX(1.0750);">Параметр источника</span>
<span class="t" style="font-size:14px;font-weight:400;color:#5e5e5e;top:374.00px;left:734.50px;letter-spacing:0.176px;-webkit-text-stroke:0.4px #5e5e5e;transform-origin:0 0;transform:scaleX(1.0750);">Агрегация</span>
<span class="t" style="font-size:14px;font-weight:400;color:#5e5e5e;top:374.00px;left:1061.25px;-webkit-text-stroke:0.4px #5e5e5e;transform-origin:0 0;transform:scaleX(1.0743);">Товары</span>
<span class="t" style="font-size:14px;font-weight:400;color:#5e5e5e;top:374.00px;left:1388.00px;-webkit-text-stroke:0.4px #5e5e5e;transform-origin:0 0;transform:scaleX(1.0536);">Название линии</span>
<span class="t" style="font-size:16px;font-weight:400;color:#333;top:302.00px;left:423.25px;letter-spacing:0.104px;transform-origin:0 0;transform:scaleX(1.0750);">Продукты</span>
<span class="t" style="font-size:16px;font-weight:400;color:#333;top:302.00px;left:750.00px;transform-origin:0 0;transform:scaleX(1.0437);">Неделя</span>
<span class="t" style="font-size:16px;font-weight:400;color:#333;top:302.00px;left:1077.00px;letter-spacing:-0.104px;">01.07.2023 17:16</span>
<span class="t" style="font-size:16px;font-weight:400;color:#333;top:302.00px;left:1223.75px;">-</span>
<span class="t" style="font-size:16px;font-weight:400;color:#333;top:302.00px;left:1253.25px;letter-spacing:0.062px;">29.07.2023 17:16</span>
<span class="t" style="font-size:16px;font-weight:400;color:#333;top:411.00px;left:423.25px;transform-origin:0 0;transform:scaleX(1.0555);">Цена с учётом всех акций на...</span>
<span class="t" style="font-size:16px;font-weight:400;color:#333;top:411.00px;left:750.00px;transform-origin:0 0;transform:scaleX(1.0528);">Максимальные значения</span>
<span class="t" style="font-size:16px;font-weight:400;color:#333;top:411.00px;left:1077.00px;transform-origin:0 0;transform:scaleX(1.0622);">Бумага</span>
<span class="t" style="font-size:16px;font-weight:400;color:#333;top:410.00px;left:1403.75px;transform-origin:0 0;transform:scaleX(1.0622);">Бумага</span>
<span class="t" style="font-size:16px;font-weight:400;color:#6a6a6a;top:488.00px;left:423.60px;letter-spacing:0.147px;">Папка</span>
<span class="t" style="font-size:16px;font-weight:400;color:#fff;top:488.00px;left:537.00px;transform-origin:0 0;transform:scaleX(1.0718);">Бумага</span>
<span class="t" style="font-size:19px;font-weight:400;color:#444;top:543.00px;left:407.20px;letter-spacing:-1.052px;">210</span>
<span class="t" style="font-size:19px;font-weight:400;color:#444;top:602.00px;left:407.20px;letter-spacing:-1.052px;">175</span>
<span class="t" style="font-size:19px;font-weight:400;color:#444;top:661.00px;left:407.20px;letter-spacing:-1.052px;">120</span>
<span class="t" style="font-size:19px;font-weight:400;color:#444;top:720.00px;left:407.20px;letter-spacing:-1.052px;">100</span>
<span class="t" style="font-size:19px;font-weight:400;color:#444;top:779.00px;left:415.40px;letter-spacing:0.259px;">75</span>
<span class="t" style="font-size:19px;font-weight:400;color:#444;top:838.00px;left:415.40px;letter-spacing:0.259px;">50</span>
<span class="t" style="font-size:19px;font-weight:400;color:#444;top:897.00px;left:426.22px;">0</span>
<span class="t" style="font-size:16px;font-weight:400;color:#333;top:933.00px;left:480.70px;-webkit-text-stroke:0.25px #333;transform-origin:0 0;transform:scaleX(1.0565);">01.07.2023</span>
<span class="t" style="font-size:16px;font-weight:400;color:#333;top:933.00px;left:727.80px;letter-spacing:0.136px;-webkit-text-stroke:0.25px #333;transform-origin:0 0;transform:scaleX(1.0750);">08.07.2023</span>
<span class="t" style="font-size:16px;font-weight:400;color:#333;top:933.00px;left:977.70px;-webkit-text-stroke:0.25px #333;transform-origin:0 0;transform:scaleX(1.0565);">15.07.2023</span>
<span class="t" style="font-size:16px;font-weight:400;color:#333;top:933.00px;left:1223.80px;letter-spacing:0.095px;-webkit-text-stroke:0.25px #333;transform-origin:0 0;transform:scaleX(1.0750);">22.07.2023</span>
<span class="t" style="font-size:16px;font-weight:400;color:#333;top:933.00px;left:1472.90px;letter-spacing:0.095px;-webkit-text-stroke:0.25px #333;transform-origin:0 0;transform:scaleX(1.0750);">29.07.2023</span>
<span class="t" style="font-size:16px;font-weight:400;color:#333;top:933.00px;left:1721.50px;letter-spacing:0.095px;-webkit-text-stroke:0.25px #333;transform-origin:0 0;transform:scaleX(1.0750);">29.07.2023</span>
<span class="t" style="font-size:16px;font-weight:400;color:#555;top:1004.00px;left:448.10px;letter-spacing:0.084px;">Папка</span>
<span class="t" style="font-size:16px;font-weight:400;color:#555;top:1004.00px;left:560.00px;transform-origin:0 0;transform:scaleX(1.0411);">Бумага</span>
<span class="t" style="font-size:17.4px;font-weight:400;color:#606060;top:622.00px;left:818.80px;letter-spacing:-0.289px;">08.09.2022</span>
<span class="t" style="font-size:23px;font-weight:400;color:#111;top:655.00px;left:833.25px;letter-spacing:-0.691px;-webkit-text-stroke:0.4px #111;">109 <span style="font-family:'DejaVu Sans',sans-serif;font-size:22px">₽</span></span>
</div>

</body>
</html>
